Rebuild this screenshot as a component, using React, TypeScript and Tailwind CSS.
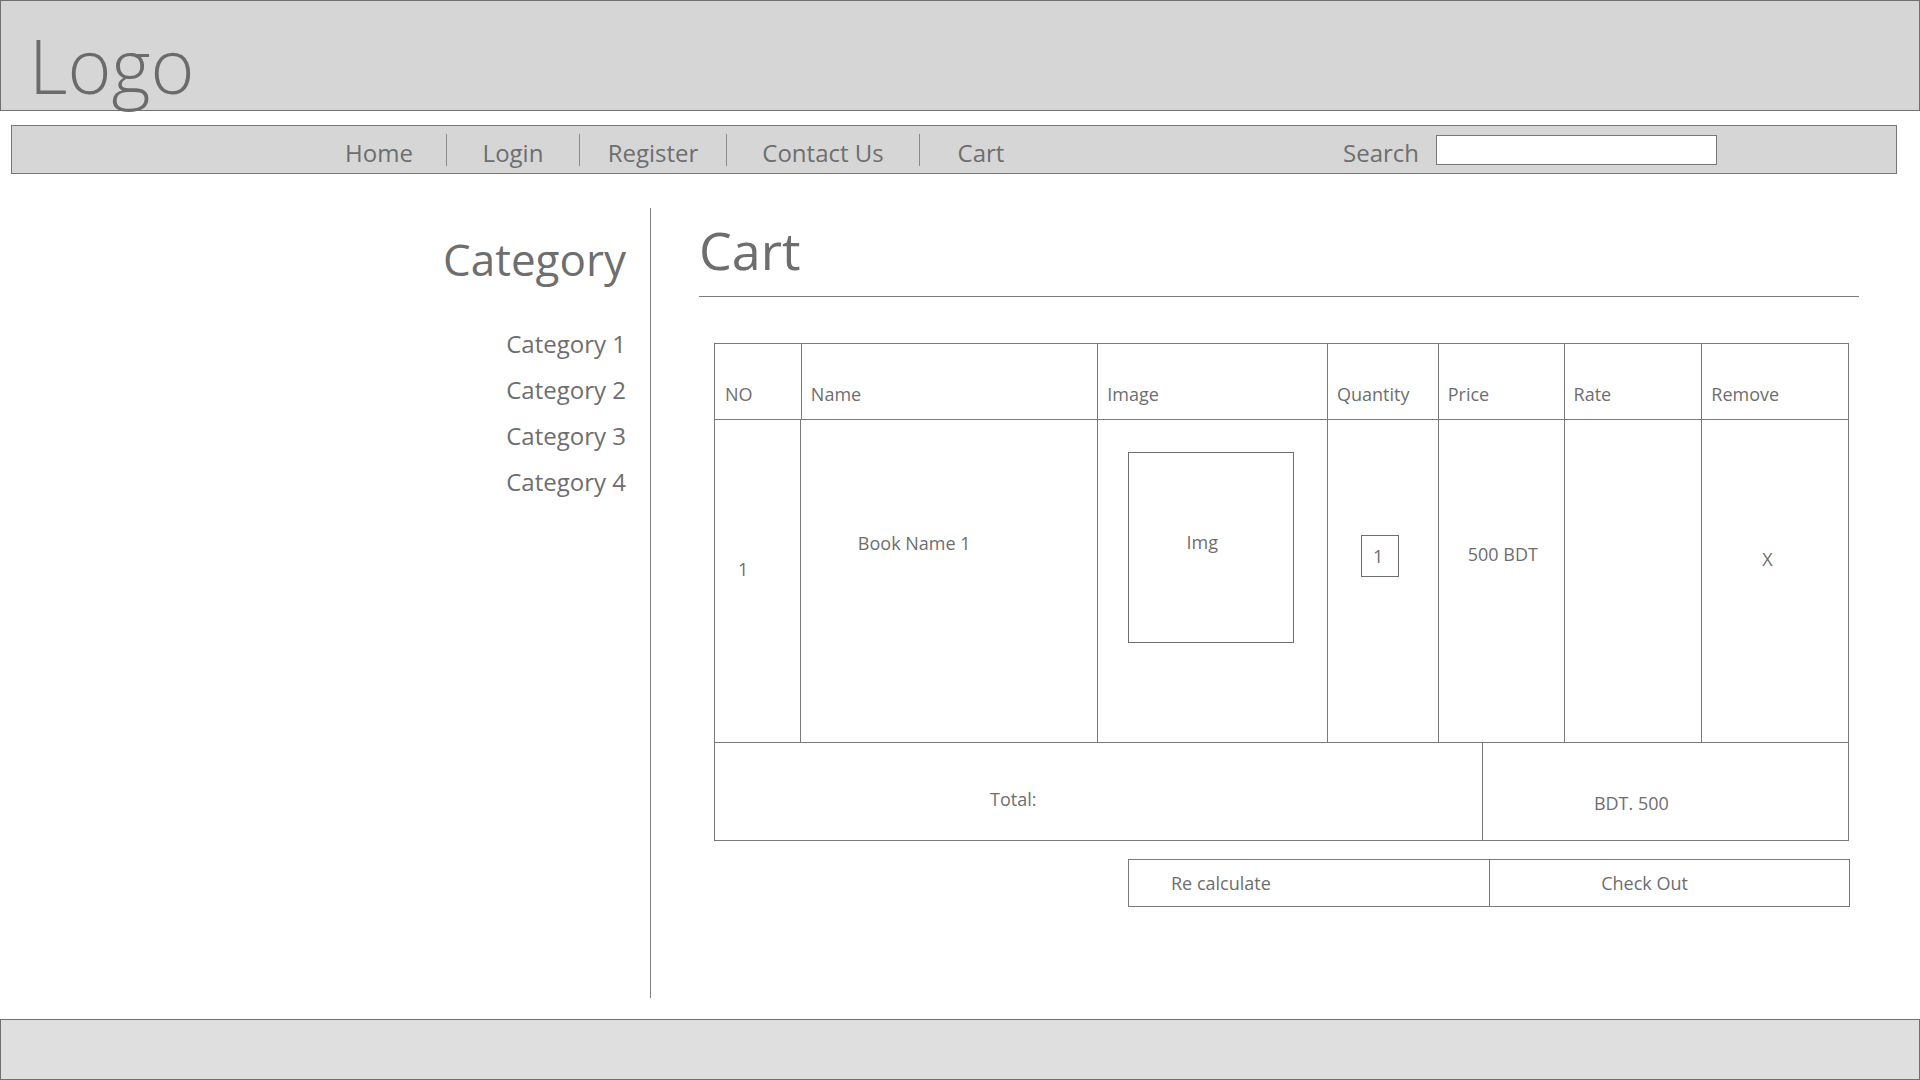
import * as React from "react";

const navItems = [
    { label: "Home", w: "w-[134px]" },
    { label: "Login", w: "w-[132px]" },
    { label: "Register", w: "w-[146px]" },
    { label: "Contact Us", w: "w-[192px]" },
    { label: "Cart", w: "w-[122px]" },
];

const categories = ["Category 1", "Category 2", "Category 3", "Category 4"];

const columns = [
    { label: "NO", w: "w-[86px]" },
    { label: "Name", w: "w-[297px]" },
    { label: "Image", w: "w-[230px]" },
    { label: "Quantity", w: "w-[111px]" },
    { label: "Price", w: "w-[126px]" },
    { label: "Rate", w: "w-[138px]" },
    { label: "Remove", w: "w-[147px]" },
];

function Header() {
    return (
        <div className="h-[111px] border border-[#707070] bg-[#d6d6d6] pl-[28px]">
            <div className="pt-[27px] text-[75px] font-light leading-none text-[#6b6b6b]">Logo</div>
        </div>
    );
}

function NavBar() {
    return (
        <div className="ml-[11px] mr-[23px] mt-[14px] flex h-[49px] items-center border border-[#777777] bg-[#d6d6d6] pl-[300px] pt-[6px] text-[24px] text-[#6e6e6e]">
            {navItems.map((item, i) => (
                <React.Fragment key={item.label}>
                    {i > 0 && <div className="-mt-[6px] h-[32px] w-px bg-[#8a8a8a]" />}
                    <div className={`${item.w} text-center`}>{item.label}</div>
                </React.Fragment>
            ))}
            <div className="ml-[301px] mr-[17px]">Search</div>
            <div className="-mt-[6px] h-[30px] w-[281px] border border-[#777777] bg-white" />
        </div>
    );
}

function Sidebar() {
    return (
        <div className="flex h-[790px] w-[651px] flex-col items-end border-r border-[#808080] pr-[24px] text-[#6e6e6e]">
            <div className="mt-[29px] text-[44px] leading-none">Category</div>
            <div className="mt-[46px] flex flex-col items-end gap-[13px] text-[24px] leading-[33px]">
                {categories.map((c) => (
                    <div key={c}>{c}</div>
                ))}
            </div>
        </div>
    );
}

function CartTable() {
    return (
        <div className="ml-[15px] mt-[46px] w-[1135px] text-[18px] text-[#6e6e6e]">
            <div className="flex h-[77px] border border-[#7a7a7a]">
                {columns.map((col, i) => (
                    <div
                        key={col.label}
                        className={`${col.w} flex items-end pb-[11px] ${i > 0 ? "border-l border-[#7a7a7a] pl-[9px]" : "pl-[10px]"}`}
                    >
                        {col.label}
                    </div>
                ))}
            </div>
            <div className="flex h-[323px] border-x border-b border-[#7a7a7a]">
                <div className="w-[85px] pl-[23px] pt-[136px]">1</div>
                <div className="w-[298px] border-l border-[#7a7a7a] pl-[57px] pt-[110px]">Book Name 1</div>
                <div className="w-[230px] border-l border-[#7a7a7a] pl-[30px] pt-[32px]">
                    <div className="flex h-[191px] w-[166px] justify-center border border-[#6e6e6e] pr-[18px] pt-[76px]">Img</div>
                </div>
                <div className="w-[111px] border-l border-[#7a7a7a] pl-[33px] pt-[115px]">
                    <div className="flex h-[42px] w-[38px] items-center border border-[#6e6e6e] pl-[11px]">1</div>
                </div>
                <div className="w-[126px] border-l border-[#7a7a7a] pl-[29px] pt-[121px]">500 BDT</div>
                <div className="w-[138px] border-l border-[#7a7a7a]" />
                <div className="w-[147px] border-l border-[#7a7a7a] pl-[60px] pt-[126px]">X</div>
            </div>
            <div className="flex h-[98px] border-x border-b border-[#7a7a7a]">
                <div className="flex w-[768px] items-center justify-center pr-[170px] pt-[16px]">Total:</div>
                <div className="flex w-[367px] items-center justify-center border-l border-[#7a7a7a] pr-[68px] pt-[24px]">BDT. 500</div>
            </div>
        </div>
    );
}

function Actions() {
    return (
        <div className="ml-[429px] mt-[18px] flex h-[48px] w-[722px] border border-[#7a7a7a] text-[18px] text-[#6e6e6e]">
            <div className="flex w-[361px] items-center pl-[42px]">Re calculate</div>
            <div className="flex w-[361px] items-center justify-center border-l border-[#7a7a7a] pr-[50px]">Check Out</div>
        </div>
    );
}

function Content() {
    return (
        <div className="pl-[48px]">
            <div className="h-[89px] w-[1160px] border-b border-[#7a7a7a]">
                <div className="pt-[16px] text-[52px] leading-none text-[#6e6e6e]">Cart</div>
            </div>
            <CartTable />
            <Actions />
        </div>
    );
}

export default function App() {
    return (
        <div className="flex h-[1080px] w-[1920px] flex-col overflow-hidden bg-white font-['Open_Sans',sans-serif]">
            <Header />
            <NavBar />
            <div className="flex flex-1 pt-[34px]">
                <Sidebar />
                <Content />
            </div>
            <div className="h-[61px] border border-[#707070] bg-[#dfdfdf]" />
        </div>
    );
}
